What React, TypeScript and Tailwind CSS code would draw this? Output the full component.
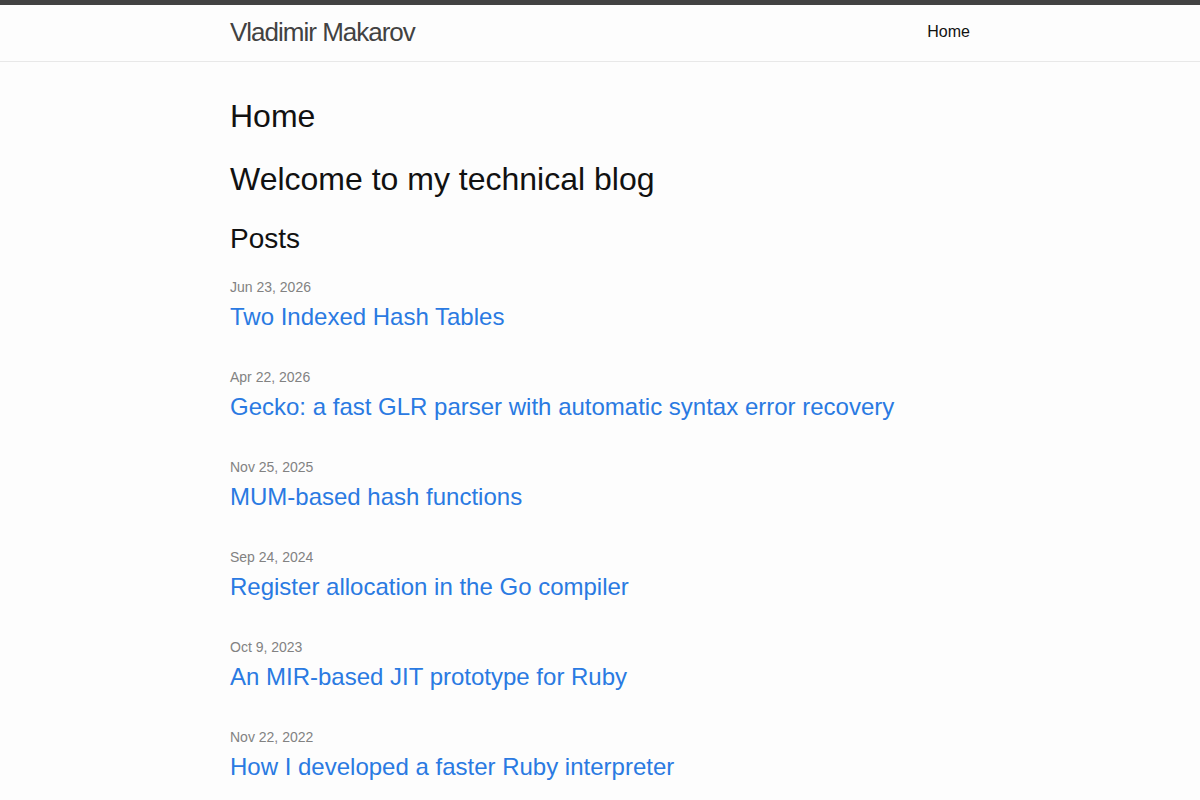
import React from "react";

const posts = [
  { date: "Jun 23, 2026", title: "Two Indexed Hash Tables" },
  { date: "Apr 22, 2026", title: "Gecko: a fast GLR parser with automatic syntax error recovery" },
  { date: "Nov 25, 2025", title: "MUM-based hash functions" },
  { date: "Sep 24, 2024", title: "Register allocation in the Go compiler" },
  { date: "Oct 9, 2023", title: "An MIR-based JIT prototype for Ruby" },
  { date: "Nov 22, 2022", title: "How I developed a faster Ruby interpreter" },
];

export default function App() {
  return (
    <div
      className="min-h-screen bg-[#fdfdfd] text-[#111111] text-base leading-6"
      style={{ fontFamily: '"Liberation Sans", Helvetica, Arial, sans-serif' }}
    >
      <header className="border-t-[5px] border-t-[#424242] border-b border-b-[#e8e8e8]">
        <div className="max-w-[740px] h-[56px] mx-auto flex items-start justify-between">
          <a className="text-[26px] leading-[54px] tracking-[-1px] text-[#424242]">Vladimir Makarov</a>
          <nav>
            <a className="text-base leading-[54px] text-[#111111]">Home</a>
          </nav>
        </div>
      </header>
      <main className="py-[30px]">
        <div className="max-w-[740px] mx-auto">
          <h1 className="text-[32px] leading-[48px] mb-[15px]">Home</h1>
          <h1 className="text-[32px] leading-[48px] mb-[15px]">Welcome to my technical blog</h1>
          <h2 className="text-[28px] leading-[42px] mb-[15px]">Posts</h2>
          <ul>
            {posts.map((p) => (
              <li key={p.date} className="mb-[30px]">
                <div className="text-sm leading-6 text-[#828282]">{p.date}</div>
                <h3>
                  <a className="block text-2xl leading-9 text-[#2a7ae2]">{p.title}</a>
                </h3>
              </li>
            ))}
          </ul>
        </div>
      </main>
    </div>
  );
}
